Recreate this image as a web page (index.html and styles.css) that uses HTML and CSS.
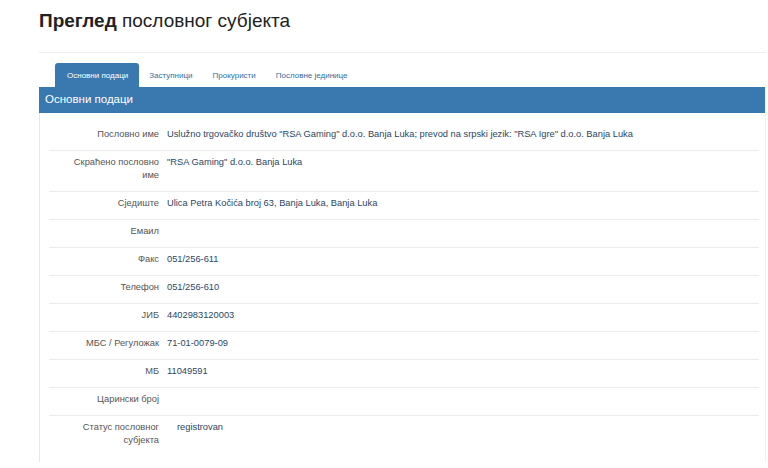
FILE: index.html
```html
<!DOCTYPE html>
<html lang="sr">
<head>
    <meta charset="UTF-8">
    <title>Преглед пословног субјекта</title>
    <link rel="stylesheet" href="styles.css">
</head>
<body>

<div class="page">
    <h1 class="title"><b>Преглед</b> пословног субјекта</h1>

    <ul class="tabs">
        <li class="active">Основни подаци</li>
        <li>Заступници</li>
        <li>Прокуристи</li>
        <li>Пословне јединице</li>
    </ul>

    <div class="panel">
        <div class="panel-heading">Основни подаци</div>
        <div class="panel-body">
            <div class="row"><div class="label">Пословно име</div><div class="value">Uslužno trgovačko društvo "RSA Gaming" d.o.o. Banja Luka; prevod na srpski jezik: "RSA Igre" d.o.o. Banja Luka</div></div>
            <div class="row"><div class="label">Скраћено пословно име</div><div class="value">"RSA Gaming" d.o.o. Banja Luka</div></div>
            <div class="row"><div class="label">Сједиште</div><div class="value">Ulica Petra Kočića broj 63, Banja Luka, Banja Luka</div></div>
            <div class="row"><div class="label">Емаил</div><div class="value"></div></div>
            <div class="row"><div class="label">Факс</div><div class="value">051/256-611</div></div>
            <div class="row"><div class="label">Телефон</div><div class="value">051/256-610</div></div>
            <div class="row"><div class="label">ЈИБ</div><div class="value">4402983120003</div></div>
            <div class="row"><div class="label">МБС / Регуложак</div><div class="value">71-01-0079-09</div></div>
            <div class="row"><div class="label">МБ</div><div class="value">11049591</div></div>
            <div class="row"><div class="label">Царински број</div><div class="value"></div></div>
            <div class="row last"><div class="label">Статус пословног субјекта</div><div class="value status">registrovan</div></div>
        </div>
    </div>
</div>

</body>
</html>
```

FILE: styles.css
```css
body {
    margin: 0;
    background: #fff;
    font-family: "Liberation Sans", Arial, sans-serif;
    color: #333;
}
.page {
    padding-left: 39px;
    padding-right: 2px;
}
.title {
    margin: 0;
    padding: 10px 0 20px;
    font-size: 19px;
    font-weight: normal;
    color: #222;
    border-bottom: 1px solid #eee;
}
.title b {
    font-weight: bold;
}
.tabs {
    list-style: none;
    margin: 10px 0 0;
    padding: 0 0 0 16px;
    display: flex;
    font-size: 8px;
}
.tabs li {
    padding: 8px 10px 7px;
    color: #336ea3;
}
.tabs li.active {
    background: #3a78b0;
    color: #fff;
    border-radius: 3px 3px 0 0;
    padding: 8px 11px 7px 12px;
}
.panel {
    border-left: 1px solid #e6e6e6;
    border-right: 1px solid #f2f2f2;
}
.panel-heading {
    background: #3a78b0;
    color: #fff;
    font-size: 11.5px;
    padding: 6px 6px 7px;
    line-height: 13px;
    margin-left: -1px;
}
.panel-body {
    padding: 10px 6px 6px 9px;
}
.row {
    display: flex;
    padding: 5px 0 9px;
    border-bottom: 1px solid #ececec;
    font-size: 9.3px;
    line-height: 13px;
}
.row.last {
    border-bottom: none;
}
.label {
    width: 88px;
    min-height: 13px;
    padding-left: 22px;
    padding-right: 8px;
    text-align: right;
    color: #555;
}
.value {
    flex: 1;
    color: #2a4665;
}
.value.status {
    padding-left: 10px;
}
```
